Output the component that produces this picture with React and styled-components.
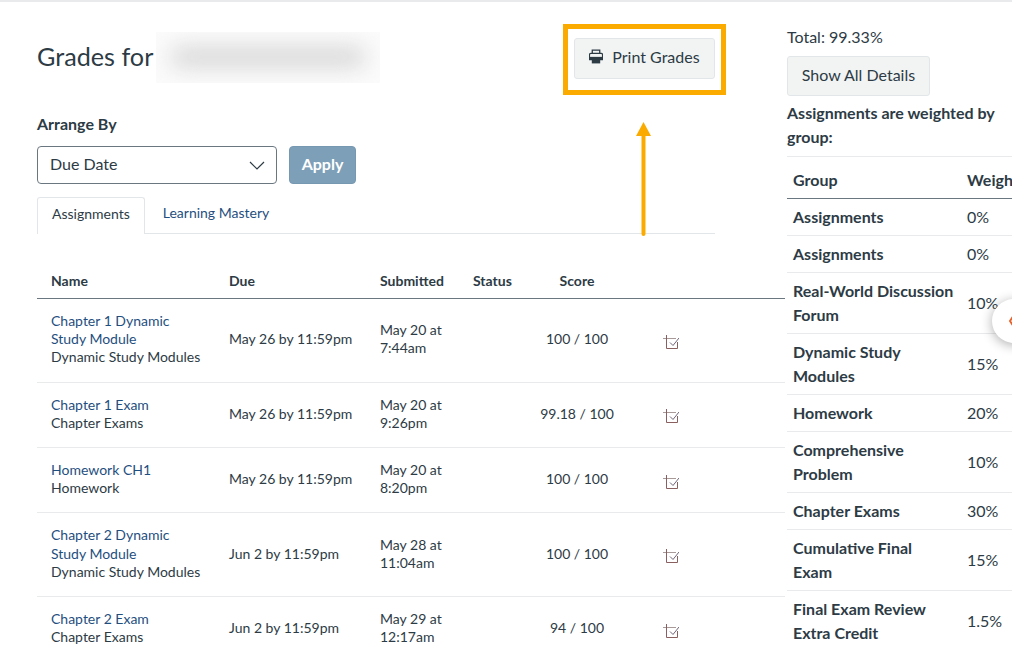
import React from "react";
import styled, { createGlobalStyle } from "styled-components";

const GlobalStyle = createGlobalStyle`
  html, body {
    margin: 0;
    height: 650px;
    overflow: hidden;
    background: #fff;
  }
  body {
    font-family: Lato, "Open Sans", "Liberation Sans", sans-serif;
    color: #2d3b45;
  }
`;

const assignments = [
  { title: ["Chapter 1 Dynamic", "Study Module"], group: "Dynamic Study Modules", due: "May 26 by 11:59pm", sub: ["May 20 at", "7:44am"], score: "100 / 100" },
  { title: ["Chapter 1 Exam"], group: "Chapter Exams", due: "May 26 by 11:59pm", sub: ["May 20 at", "9:26pm"], score: "99.18 / 100" },
  { title: ["Homework CH1"], group: "Homework", due: "May 26 by 11:59pm", sub: ["May 20 at", "8:20pm"], score: "100 / 100" },
  { title: ["Chapter 2 Dynamic", "Study Module"], group: "Dynamic Study Modules", due: "Jun 2 by 11:59pm", sub: ["May 28 at", "11:04am"], score: "100 / 100" },
  { title: ["Chapter 2 Exam"], group: "Chapter Exams", due: "Jun 2 by 11:59pm", sub: ["May 29 at", "12:17am"], score: "94 / 100" },
];

const weights = [
  ["Assignments", "0%"],
  ["Assignments", "0%"],
  ["Real-World Discussion Forum", "10%"],
  ["Dynamic Study Modules", "15%"],
  ["Homework", "20%"],
  ["Comprehensive Problem", "10%"],
  ["Chapter Exams", "30%"],
  ["Cumulative Final Exam", "15%"],
  ["Final Exam Review Extra Credit", "1.5%"],
];

const Page = styled.div`
  position: relative;
  display: flex;
  width: 1012px;
  height: 650px;
  overflow: hidden;
  border-top: 2px solid #e8eaec;
  box-sizing: border-box;
`;

const Main = styled.main`
  flex: 0 0 748px;
  margin-left: 37px;
`;

const Header = styled.div`
  display: flex;
  align-items: flex-start;
  width: 689px;
  padding-top: 22px;
`;

const Title = styled.h1`
  margin: 11px 3px 0 0;
  font-size: 25.2px;
  line-height: 42px;
  font-weight: 400;
`;

const Redacted = styled.div`
  width: 224px;
  height: 51px;
  margin-top: 8px;
  overflow: hidden;
  background: #fbfbfb;

  &::after {
    content: "";
    display: block;
    width: 196px;
    height: 20px;
    margin: 15px 0 0 14px;
    border-radius: 10px;
    background: #d6d6d6;
    filter: blur(11px);
  }
`;

const Highlight = styled.div`
  margin-left: auto;
  padding: 9px 6px 11px;
  border: 5px solid #fbab00;
`;

const Button = styled.button`
  display: flex;
  align-items: center;
  justify-content: center;
  gap: 9px;
  box-sizing: border-box;
  width: 141px;
  height: 41px;
  padding: 0 0 4px;
  background: #f2f4f4;
  border: 1px solid #e3e6e8;
  border-radius: 3px;
  font-family: inherit;
  font-size: 16px;
  white-space: nowrap;
  color: #2d3b45;
`;

const Label = styled.div`
  margin-top: 17px;
  font-size: 16px;
  line-height: 24px;
  font-weight: 700;
`;

const Filters = styled.div`
  display: flex;
  gap: 12px;
  margin-top: 10px;
`;

const SelectBox = styled.div`
  display: flex;
  align-items: center;
  justify-content: space-between;
  box-sizing: border-box;
  width: 240px;
  height: 38px;
  padding: 0 11px 3px 12px;
  border: 1px solid #6b7780;
  border-radius: 4px;
  font-size: 16px;

  svg {
    margin-top: 3px;
  }
`;

const ApplyButton = styled.button`
  box-sizing: border-box;
  width: 67px;
  height: 38px;
  padding: 0 0 3px;
  background: #7e9fb8;
  border: 1px solid #7798b1;
  border-radius: 4px;
  font-family: inherit;
  font-size: 16px;
  font-weight: 700;
  color: #fff;
`;

const Tabs = styled.div`
  display: flex;
  width: 678px;
  height: 36px;
  margin-top: 13px;
  border-bottom: 1px solid #e3e6e8;
`;

const Tab = styled.div`
  box-sizing: border-box;
  height: ${(p) => (p.$active ? "37px" : "36px")};
  padding: 0 ${(p) => (p.$active ? "14px" : "18px")};
  line-height: 32px;
  font-size: 14px;
  color: ${(p) => (p.$active ? "#2d3b45" : "#1f4f80")};
  background: #fff;
  border: ${(p) => (p.$active ? "1px solid #e3e6e8" : "0")};
  border-bottom: 0;
  border-radius: 3px 3px 0 0;
`;

const columns = "178px 151px 93px 71px 94px 94px 1fr";

const HeadRow = styled.div`
  display: grid;
  grid-template-columns: ${columns};
  align-items: center;
  height: 36px;
  margin-top: 26px;
  padding-top: 2px;
  border-bottom: 1px solid #6b7780;
  font-size: 14px;
  font-weight: 700;
`;

const Row = styled.div`
  display: grid;
  grid-template-columns: ${columns};
  align-items: center;
  padding: 13px 0 15px;
  border-bottom: 1px solid #e8eaec;
  font-size: 14px;
  line-height: 18.2px;
`;

const Cell = styled.div`
  padding-left: 14px;
  text-align: ${(p) => (p.$center ? "center" : "left")};
  ${(p) => p.$center && "padding: 0;"}
`;

const TitleLink = styled.a`
  display: block;
  color: #1f4f80;
`;

const IconCell = styled.div`
  display: flex;
  justify-content: center;
  padding-top: 6px;
`;

const Side = styled.aside`
  flex: 0 0 260px;
  margin-left: 2px;
`;

const Total = styled.div`
  margin-top: 23px;
  font-size: 16px;
  line-height: 24px;
`;

const SideButton = styled(Button)`
  margin-top: 7px;
  width: 143px;
  height: 40px;
`;

const WeightNote = styled.div`
  width: 225px;
  margin-top: 5px;
  font-size: 16px;
  line-height: 24px;
  font-weight: 700;
`;

const WeightTable = styled.div`
  margin-top: 7px;
  border-top: 1px solid #e8eaec;
`;

const WeightRow = styled.div`
  display: grid;
  grid-template-columns: 174px 1fr;
  align-items: center;
  padding: ${(p) => (p.$head ? "11px 0 6px" : "6px 0")};
  border-bottom: 1px solid ${(p) => (p.$head ? "#6b7780" : "#e8eaec")};
  font-size: 16px;
  line-height: 24px;
`;

const WeightName = styled.div`
  padding: 0 7px 0 6px;
  font-weight: 700;
`;

const WeightValue = styled.div`
  padding: 0 6px;
  font-weight: ${(p) => (p.$head ? 700 : 400)};
  white-space: nowrap;
`;

const Arrow = styled.svg`
  position: absolute;
  left: 634px;
  top: 118px;
`;

const FloatingToggle = styled.div`
  position: absolute;
  left: 992px;
  top: 297px;
  display: flex;
  align-items: center;
  width: 44px;
  height: 44px;
  padding-left: 17px;
  box-sizing: border-box;
  background: #fff;
  border-radius: 50%;
  box-shadow: 0 2px 12px rgba(0, 0, 0, 0.32);
`;

const PrinterIcon = () => (
  <svg width="14" height="15" viewBox="0 0 15 16">
    <path d="M3.5 5V1.2h8V5" fill="none" stroke="#2d3b45" strokeWidth="1.4" />
    <path d="M2 4.6h11a1.5 1.5 0 0 1 1.5 1.5v5.2H.5V6.1A1.5 1.5 0 0 1 2 4.6z" fill="none" stroke="#2d3b45" strokeWidth="1.3" />
    <rect x="0.5" y="8.4" width="14" height="3" fill="#2d3b45" />
    <rect x="3" y="10" width="9" height="5.4" fill="#2d3b45" />
  </svg>
);

const Chevron = () => (
  <svg width="16" height="9" viewBox="0 0 16 9">
    <path d="M1 1l7 7 7-7" fill="none" stroke="#2d3b45" strokeWidth="1.2" />
  </svg>
);

const RubricIcon = () => (
  <svg width="16" height="15" viewBox="0 0 16 15">
    <path d="M0 3.5H13" fill="none" stroke="#a89a98" strokeWidth="1" />
    <path d="M3.5 0V13.5H14.5V7" fill="none" stroke="#8a5f5f" strokeWidth="1" />
    <path d="M7 7.5l3 3 6-7.5" fill="none" stroke="#6f6478" strokeWidth="1" />
  </svg>
);

export default function App() {
  return (
    <>
      <GlobalStyle />
      <Page>
        <Main>
          <Header>
            <Title>Grades for</Title>
            <Redacted />
            <Highlight>
              <Button>
                <PrinterIcon />
                Print Grades
              </Button>
            </Highlight>
          </Header>

          <Label>Arrange By</Label>
          <Filters>
            <SelectBox>
              Due Date
              <Chevron />
            </SelectBox>
            <ApplyButton>Apply</ApplyButton>
          </Filters>

          <Tabs>
            <Tab $active>Assignments</Tab>
            <Tab>Learning Mastery</Tab>
          </Tabs>

          <HeadRow>
            <Cell>Name</Cell>
            <Cell>Due</Cell>
            <Cell>Submitted</Cell>
            <Cell>Status</Cell>
            <Cell $center>Score</Cell>
          </HeadRow>
          {assignments.map((a, i) => (
            <Row key={i}>
              <Cell>
                {a.title.map((line) => (
                  <TitleLink key={line}>{line}</TitleLink>
                ))}
                {a.group}
              </Cell>
              <Cell>{a.due}</Cell>
              <Cell>
                {a.sub[0]}
                <br />
                {a.sub[1]}
              </Cell>
              <Cell />
              <Cell $center>{a.score}</Cell>
              <IconCell>
                <RubricIcon />
              </IconCell>
            </Row>
          ))}
        </Main>

        <Side>
          <Total>Total: 99.33%</Total>
          <SideButton>Show All Details</SideButton>
          <WeightNote>Assignments are weighted by group:</WeightNote>
          <WeightTable>
            <WeightRow $head>
              <WeightName>Group</WeightName>
              <WeightValue $head>Weight</WeightValue>
            </WeightRow>
            {weights.map(([name, value], i) => (
              <WeightRow key={i}>
                <WeightName>{name}</WeightName>
                <WeightValue>{value}</WeightValue>
              </WeightRow>
            ))}
          </WeightTable>
        </Side>

        <Arrow width="20" height="118" viewBox="0 0 20 118">
          <path d="M9.5 10V114" stroke="#fbab00" strokeWidth="4" strokeLinecap="round" />
          <path d="M9.5 2L17 16H2z" fill="#fbab00" />
        </Arrow>

        <FloatingToggle>
          <svg width="4" height="10" viewBox="0 0 4 10">
            <path d="M4 0.5L1 5l3 4.5" fill="none" stroke="#e8622c" strokeWidth="2" />
          </svg>
        </FloatingToggle>
      </Page>
    </>
  );
}
